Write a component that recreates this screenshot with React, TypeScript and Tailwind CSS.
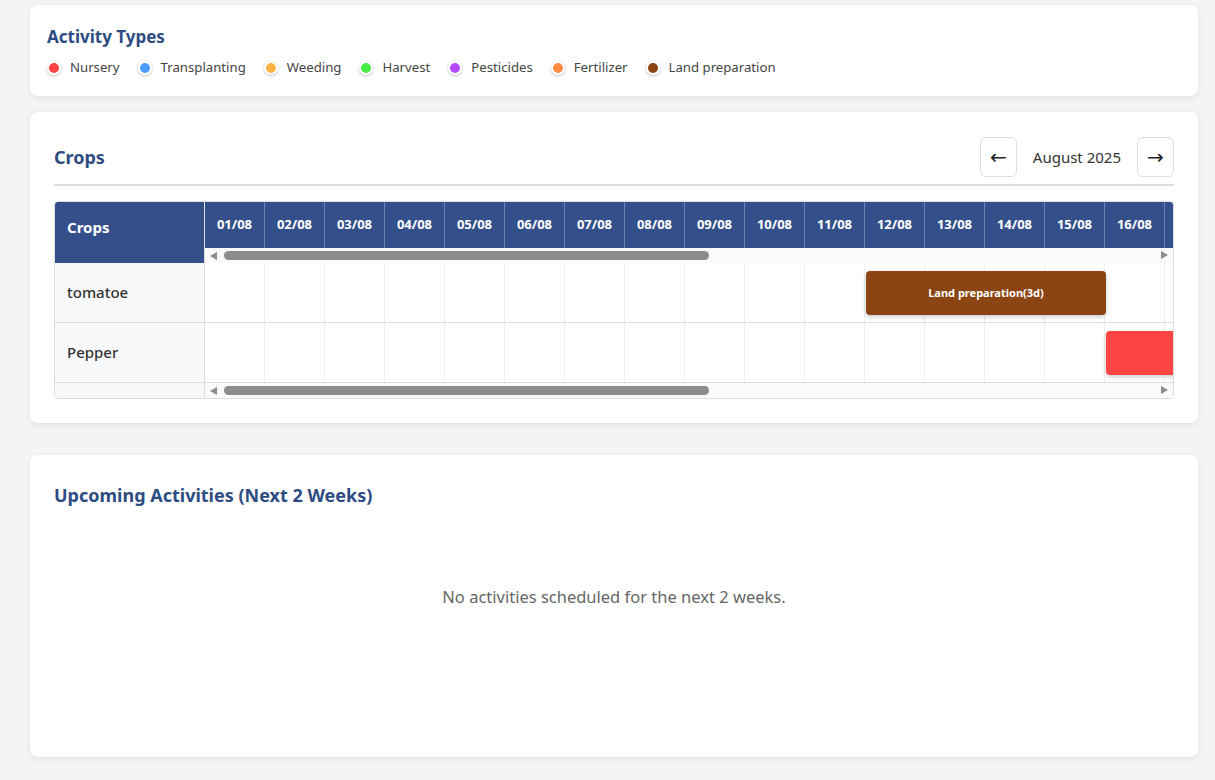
import React from "react";

const legend = [
  { name: "Nursery", color: "bg-[#ff4444]" },
  { name: "Transplanting", color: "bg-[#4a9eff]" },
  { name: "Weeding", color: "bg-[#ffb347]" },
  { name: "Harvest", color: "bg-[#44ee44]" },
  { name: "Pesticides", color: "bg-[#b44aff]" },
  { name: "Fertilizer", color: "bg-[#ff8c42]" },
  { name: "Land preparation", color: "bg-[#8b4513]" },
];

// only the days that fit in the visible window of the timeline
const days = Array.from({ length: 17 }, (_, i) => `${String(i + 1).padStart(2, "0")}/08`);

interface Bar {
  label: string;
  start: number;
  span: number;
  color: string;
}

const crops: { name: string; bars: Bar[] }[] = [
  { name: "tomatoe", bars: [{ label: "Land preparation(3d)", start: 11, span: 4, color: "bg-[#8b4513]" }] },
  { name: "Pepper", bars: [{ label: "", start: 15, span: 4, color: "bg-[#ff4444]" }] },
];

function FakeScrollbar() {
  return (
    <div className="h-[15px] bg-[#fafafa] flex items-center relative shrink-0">
      <div className="ml-[5px] w-0 h-0 border-y-[4px] border-y-transparent border-r-[7px] border-r-[#8c8c8c]" />
      <div className="ml-[7px] w-[485px] h-[9px] rounded-full bg-[#8c8c8c]" />
      <div className="absolute right-[5px] top-[3px] w-0 h-0 border-y-[4px] border-y-transparent border-l-[7px] border-l-[#8c8c8c]" />
    </div>
  );
}

export default function App() {
  return (
    <div className="min-h-screen bg-[#f4f5f3] pl-[30px] pr-[17px] pt-[5px] pb-[23px] font-['Noto_Sans','Liberation_Sans',sans-serif] text-[#333]">
      {/* Activity types legend */}
      <div className="bg-white rounded-lg shadow-[0_2px_6px_rgba(0,0,0,0.08)] px-[17px] pt-[20px] pb-[17px]">
        <h3 className="text-[17px] leading-[24px] font-bold text-[#2c4c82]">Activity Types</h3>
        <div className="mt-[8px] h-[22px] flex items-center gap-[18px]">
          {legend.map((l) => (
            <div key={l.name} className="flex items-center gap-[9px]">
              <span className={`w-[14px] h-[14px] rounded-full border-2 border-white shadow-[0_1px_3px_rgba(0,0,0,0.25)] ${l.color}`} />
              <span className="text-[13.2px] text-[#444]">{l.name}</span>
            </div>
          ))}
        </div>
      </div>

      {/* Crops gantt */}
      <div className="mt-[16px] bg-white rounded-lg shadow-[0_2px_6px_rgba(0,0,0,0.08)] px-[24px] pt-[25px] pb-[24px]">
        <div className="flex items-center justify-between pb-[7px] border-b-2 border-[#ddd]">
          <h2 className="text-[18px] font-bold text-[#2c4c82]">Crops</h2>
          <div className="flex items-center gap-[16px]">
            <button className="w-[37px] h-[40px] rounded-md border border-[#ddd] bg-white text-[20px] leading-none text-[#222] font-['DejaVu_Sans',sans-serif] flex items-center justify-center">←</button>
            <span className="text-[15px] text-[#333]">August 2025</span>
            <button className="w-[37px] h-[40px] rounded-md border border-[#ddd] bg-white text-[20px] leading-none text-[#222] font-['DejaVu_Sans',sans-serif] flex items-center justify-center">→</button>
          </div>
        </div>

        <div className="mt-[15px] border border-[#ddd] rounded flex overflow-hidden">
          {/* left column */}
          <div className="w-[150px] shrink-0 border-r border-[#ddd] bg-[#f8f9fa] flex flex-col">
            <div className="h-[61px] bg-[#34508a] text-white font-bold text-[15px] leading-[20px] px-[12px] pt-[15px]">Crops</div>
            {crops.map((c) => (
              <div key={c.name} className="h-[60px] border-b border-[#ddd] flex items-center px-[12px] text-[15px] font-medium text-[#333]">
                {c.name}
              </div>
            ))}
            <div className="h-[15px]" />
          </div>

          {/* timeline */}
          <div className="flex-1 min-w-0 overflow-hidden flex flex-col">
            <div className="flex h-[46px] bg-[#34508a]">
              {days.map((d) => (
                <div key={d} className="w-[60px] shrink-0 border-r border-white/30 flex items-center justify-center text-white font-bold text-[13px]">
                  {d}
                </div>
              ))}
            </div>
            <FakeScrollbar />
            {crops.map((c) => (
              <div key={c.name} className="relative flex h-[60px] border-b border-[#ddd]">
                {days.map((d) => (
                  <div key={d} className="w-[60px] shrink-0 border-r border-[#eee]" />
                ))}
                {c.bars.map((b) => (
                  <div
                    key={b.start}
                    className={`absolute top-[8px] h-[44px] rounded ${b.color} shadow-[0_2px_4px_rgba(0,0,0,0.2)] flex items-center justify-center text-white font-bold text-[11px] whitespace-nowrap`}
                    style={{ left: b.start * 60 + 1, width: b.span * 60 }}
                  >
                    {b.label}
                  </div>
                ))}
              </div>
            ))}
            <FakeScrollbar />
          </div>
        </div>
      </div>

      {/* Upcoming */}
      <div className="mt-[32px] h-[302px] bg-white rounded-lg shadow-[0_2px_6px_rgba(0,0,0,0.08)] px-[24px] pt-[28px]">
        <h2 className="text-[18px] leading-[24px] font-bold text-[#2c4c82]">Upcoming Activities (Next 2 Weeks)</h2>
        <p className="mt-[78px] text-center text-[16.5px] leading-[24px] text-[#666]">No activities scheduled for the next 2 weeks.</p>
      </div>
    </div>
  );
}
